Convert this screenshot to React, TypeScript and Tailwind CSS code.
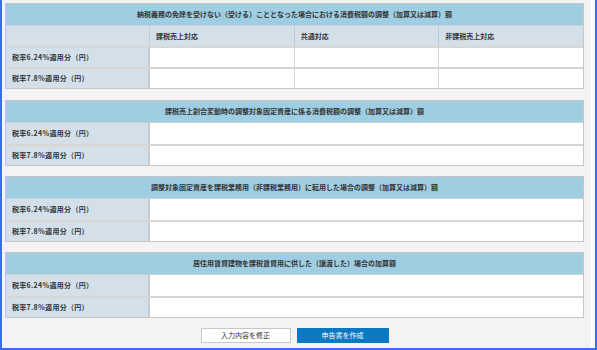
import React from "react";

const font = {
  fontFamily: '"Noto Sans CJK JP", "Noto Sans", sans-serif',
};

const rateRows = ["税率6.24%適用分（円）", "税率7.8%適用分（円）"];

function Header({ title }: { title: string }) {
  return (
    <div className="flex h-[22px] items-center justify-center border-b border-[#c9d3da] bg-[#9fcee2] text-[7px] font-bold text-[#333]">
      {title}
    </div>
  );
}

function Label({ text }: { text: string }) {
  return (
    <div className="flex w-[144px] shrink-0 items-center border-r-2 border-[#c9c9c9] bg-[#d3e0e9] pl-[6px] text-[7px] font-bold tracking-[0.3px] text-[#333]">
      {text}
    </div>
  );
}

function SimpleTable({ title }: { title: string }) {
  return (
    <div className="border border-[#c6c6c6] bg-white">
      <Header title={title} />
      {rateRows.map((r, i) => (
        <div
          key={r}
          className={[
            "flex h-[21px]",
            i > 0 ? "border-t-2 border-[#d6d6d6]" : "",
          ].join(" ")}
        >
          <Label text={r} />
          <div className="flex-1 bg-white" />
        </div>
      ))}
    </div>
  );
}

function FirstTable() {
  const cols = ["課税売上対応", "共通対応", "非課税売上対応"];
  return (
    <div className="border border-[#c6c6c6] bg-white">
      <Header title="納税義務の免除を受けない（受ける）こととなった場合における消費税額の調整（加算又は減算）額" />
      <div className="flex h-[20px] bg-[#d3e0e9] text-[7px] font-bold text-[#333]">
        <div className="w-[144px] shrink-0 border-r border-[#c9c9c9]" />
        {cols.map((c, i) => (
          <div
            key={c}
            className={[
              "flex flex-1 items-center pl-[6px]",
              i < 2 ? "border-r border-[#c9c9c9]" : "",
            ].join(" ")}
          >
            {c}
          </div>
        ))}
      </div>
      {rateRows.map((r) => (
        <div key={r} className="flex h-[21px] border-t-2 border-[#d6d6d6]">
          <Label text={r} />
          {cols.map((c, i) => (
            <div
              key={c}
              className={[
                "flex-1 bg-white",
                i < 2 ? "border-r border-[#d6d6d6]" : "",
              ].join(" ")}
            />
          ))}
        </div>
      ))}
    </div>
  );
}

export default function App() {
  return (
    <div
      style={font}
      className="flex h-[350px] w-[597px] border-b-2 border-l-2 border-r-2 border-[#3a6cf0]"
    >
      <div className="flex flex-1 flex-col bg-[#f3f3f3] pl-[3px] pr-[7px] pt-[3px]">
        <FirstTable />
        <div className="mt-[11px]">
          <SimpleTable title="課税売上割合変動時の調整対象固定資産に係る消費税額の調整（加算又は減算）額" />
        </div>
        <div className="mt-[10px]">
          <SimpleTable title="調整対象固定資産を課税業務用（非課税業務用）に転用した場合の調整（加算又は減算）額" />
        </div>
        <div className="mt-[10px]">
          <SimpleTable title="居住用賃貸建物を課税賃貸用に供した（譲渡した）場合の加算額" />
        </div>
        <div className="mt-[10px] flex justify-center gap-[6px]">
          <button className="flex h-[15px] w-[90px] items-center justify-center border border-[#c8c8c8] bg-white text-[7px] text-[#333]">
            入力内容を修正
          </button>
          <button className="flex h-[15px] w-[92px] items-center justify-center bg-[#0b78c2] text-[7px] text-white">
            申告書を作成
          </button>
        </div>
      </div>
      <div className="w-[4px] bg-white" />
    </div>
  );
}
